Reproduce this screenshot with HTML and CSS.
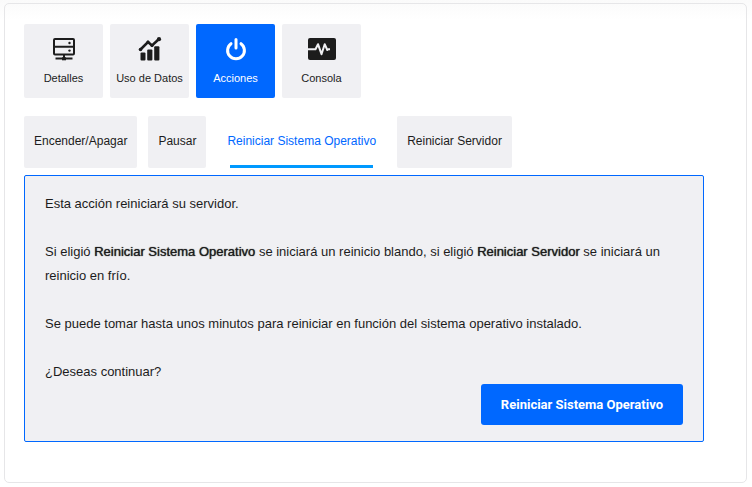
FILE: index.html
```html
<!DOCTYPE html>
<html lang="es">
<head>
<meta charset="utf-8">
<meta name="viewport" content="width=device-width, initial-scale=1">
<title>Acciones del servidor</title>
<link rel="stylesheet" href="styles.css">
</head>
<body>
<main class="card">
  <nav class="tiles" aria-label="Secciones">
    <button type="button" class="tile">
      <svg class="icon" width="28" height="24" viewBox="0 0 28 24" fill="none" stroke="currentColor" stroke-width="2" stroke-linejoin="round" aria-hidden="true">
        <rect x="4" y="2" width="20" height="15.500" rx="1"/>
        <path d="M4 9.800h20M14 17v5M5.500 21.500h17"/>
        <path d="M12 21.800h4" stroke-width="3"/>
        <circle cx="19.500" cy="6" r="1.200" fill="currentColor" stroke="none"/>
        <circle cx="19.500" cy="13.600" r="1.200" fill="currentColor" stroke="none"/>
      </svg>
      <span>Detalles</span>
    </button>
    <button type="button" class="tile">
      <svg class="icon" width="28" height="24" viewBox="0 0 28 24" fill="currentColor" aria-hidden="true">
        <rect x="4.500" y="15.500" width="5" height="8" rx="1"/>
        <rect x="11.200" y="12.500" width="5.200" height="11" rx="1"/>
        <rect x="18.200" y="9.200" width="5.200" height="14.300" rx="1"/>
        <path d="M4.500 12.500L12 5l4 3.500L23 2" fill="none" stroke="currentColor" stroke-width="2.500"/>
        <circle cx="4.500" cy="12.500" r="1.800"/><circle cx="12" cy="5" r="1.600"/><circle cx="16" cy="8.500" r="1.600"/><circle cx="23" cy="2.200" r="2.100"/>
      </svg>
      <span>Uso de Datos</span>
    </button>
    <button type="button" class="tile tile-active" aria-current="page">
      <svg class="icon" width="28" height="24" viewBox="0 0 28 24" fill="none" stroke="currentColor" stroke-width="3" stroke-linecap="round" aria-hidden="true">
        <path d="M14 2.500v8.500M9 6.700a8.400 8.400 0 1 0 10 0"/>
      </svg>
      <span>Acciones</span>
    </button>
    <button type="button" class="tile">
      <svg class="icon" width="28" height="24" viewBox="0 0 28 24" aria-hidden="true">
        <rect x="0" y="1" width="28" height="22" rx="2" fill="currentColor"/>
        <path d="M0 12.200h7.500l2.500-5 3.500 10 3.200-10 2.600 5.800 1-0.800H22" fill="none" stroke="#f0f0f3" stroke-width="2" stroke-linejoin="round"/>
      </svg>
      <span>Consola</span>
    </button>
  </nav>

  <nav class="tabs" aria-label="Acciones">
    <button type="button" class="tab">Encender/Apagar</button>
    <button type="button" class="tab">Pausar</button>
    <button type="button" class="tab tab-active" aria-current="true">Reiniciar Sistema Operativo</button>
    <button type="button" class="tab">Reiniciar Servidor</button>
  </nav>

  <section class="panel">
    <p>Esta acción reiniciará su servidor.</p>
    <p>Si eligió <strong>Reiniciar Sistema Operativo</strong> se iniciará un reinicio blando, si eligió <strong>Reiniciar Servidor</strong> se iniciará un reinicio en frío.</p>
    <p>Se puede tomar hasta unos minutos para reiniciar en función del sistema operativo instalado.</p>
    <p>¿Deseas continuar?</p>
    <button type="button" class="submit">Reiniciar Sistema Operativo</button>
  </section>
</main>
</body>
</html>
```
FILE: styles.css
```css
* {
  box-sizing: border-box;
}

body {
  margin: 0;
  padding: 3px 5px 4px 4px;
  background: linear-gradient(#fafafa, #fff 20px) no-repeat #fff;
  color: #1c1c1c;
  font-family: "Liberation Sans", Arial, sans-serif;
  font-size: 13px;
  line-height: 24px;
}

button {
  border: 0;
  border-radius: 2px;
  font: inherit;
  color: inherit;
  cursor: pointer;
}

.card {
  padding: 20px 42px 40px 19px;
  border: 1px solid #e6e6e8;
  border-radius: 5px;
}

.tiles {
  display: flex;
  gap: 7px;
}

.tile {
  display: flex;
  flex-direction: column;
  align-items: center;
  gap: 9px;
  width: 79px;
  padding: 13px 0 12px;
  background: #f0f0f3;
  font-size: 11px;
  line-height: 16px;
  white-space: nowrap;
}

.tile-active {
  background: #0068ff;
  color: #fff;
}

.icon {
  display: block;
}

.tabs {
  display: flex;
  gap: 11px;
  margin: 18px 0 7px;
}

.tab {
  padding: 13px 10px 15px;
  background: #f0f0f3;
  font-size: 12px;
  line-height: 24px;
  white-space: nowrap;
}

.tab-active {
  position: relative;
  background: none;
  color: #0068ff;
}

.tab-active::after {
  content: "";
  position: absolute;
  right: 13px;
  bottom: 0;
  left: 13px;
  height: 3px;
  background: #0099ff;
}

.panel {
  display: flex;
  flex-direction: column;
  padding: 16px 20px;
  border: 1px solid #0068ff;
  border-radius: 2px;
  background: #f0f0f3;
}

.panel p {
  margin: 0 0 24px;
}

.panel p:last-of-type {
  margin-bottom: 0;
}

.panel strong {
  font-weight: 400;
  text-shadow: 0 0 1px currentColor;
}

.submit {
  align-self: flex-end;
  padding: 10px 20px;
  border-radius: 3px;
  background: #0068ff;
  color: #fff;
  font-family: Roboto, sans-serif;
  font-size: 13px;
  font-weight: 700;
  line-height: 21px;
}
```
